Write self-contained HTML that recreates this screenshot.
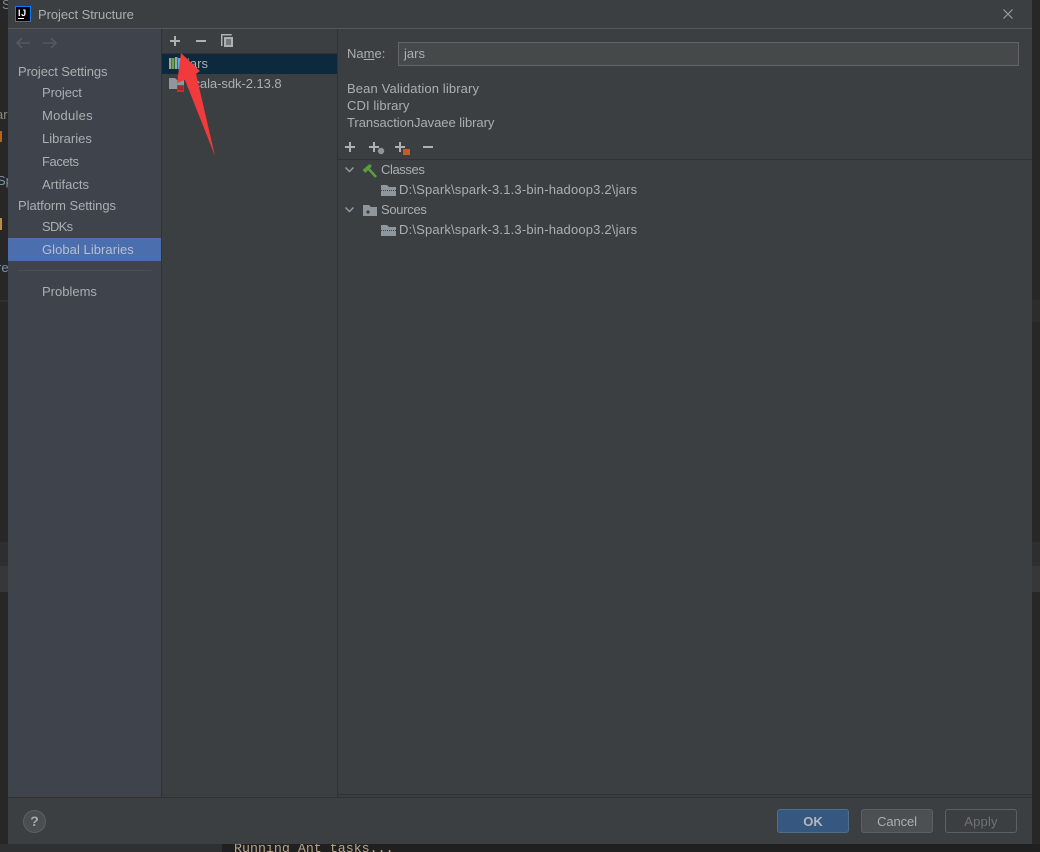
<!DOCTYPE html>
<html><head><meta charset="utf-8"><style>
html,body{margin:0;padding:0;background:#2a2b2c;}
#r{position:relative;width:1040px;height:852px;overflow:hidden;background:#272727;font-family:"Liberation Sans","Noto Sans CJK SC",sans-serif;font-size:13px;color:#abafb1;}
.a{position:absolute;}
.t{position:absolute;white-space:nowrap;line-height:16px;}
svg{position:absolute;left:0;top:0;}
</style></head><body><div id="r">
<div class="a" style="left:0;top:300px;width:8px;height:2px;background:#313131"></div>
<div class="a" style="left:0;top:542px;width:8px;height:24px;background:#2d2e2f"></div>
<div class="a" style="left:0;top:566px;width:8px;height:26px;background:#363738"></div>
<div class="a" style="left:1032px;top:300px;width:8px;height:22px;background:#2c2c2c"></div>
<div class="a" style="left:1032px;top:542px;width:8px;height:24px;background:#2d2e30"></div>
<div class="a" style="left:1032px;top:566px;width:8px;height:26px;background:#363738"></div>
<div class="a" style="left:0;top:844px;width:222px;height:8px;background:#2f3031"></div>
<div class="t" style="left:2px;top:-3px;color:#7d8a97">S</div>
<div class="t" style="left:0;top:107px;color:#8c8c7c;margin-left:-4px">ar</div>
<div class="a" style="left:0;top:131px;width:2px;height:11px;background:#b5641c"></div>
<div class="t" style="left:-3px;top:173px;color:#7c92a8">Sp</div>
<div class="a" style="left:0;top:218px;width:2px;height:12px;background:#c08a4a"></div>
<div class="t" style="left:-3px;top:260px;color:#7c92a8">re</div>
<div class="a" style="left:222px;top:844px;width:818px;height:8px;background:#202020"></div>
<div class="t" style="left:234px;top:841px;font-family:'Liberation Mono',monospace;font-size:13.3px;color:#b8a48a;height:11px;overflow:hidden">Running Ant tasks...</div>

<div class="a" style="left:8px;top:0;width:1024px;height:844px;background:#3c3f41"></div>
<div class="a" style="left:8px;top:28px;width:1024px;height:1px;background:#555759"></div>
<div class="a" style="left:8px;top:29px;width:153px;height:768px;background:#3e434c"></div>
<div class="a" style="left:161px;top:29px;width:1px;height:768px;background:#323232"></div>
<div class="a" style="left:337px;top:29px;width:1px;height:768px;background:#323232"></div>
<div class="a" style="left:162px;top:53px;width:175px;height:1px;background:#323232"></div>
<div class="a" style="left:162px;top:54px;width:175px;height:20px;background:#0d293e"></div>
<div class="a" style="left:338px;top:159px;width:694px;height:1px;background:#323232"></div>
<div class="a" style="left:338px;top:794px;width:694px;height:1px;background:#323232"></div>
<div class="a" style="left:8px;top:797px;width:1024px;height:1px;background:#323232"></div>
<div class="a" style="left:8px;top:238px;width:153px;height:23px;background:#4b6eaf"></div>
<div class="a" style="left:18px;top:270px;width:133px;height:1px;background:#4d4e4f"></div>

<div class="a" style="left:15px;top:6px;width:14px;height:14px;background:#000;border:1px solid #087cfa"></div>
<div class="t" style="left:18px;top:5px;font-size:9px;font-weight:bold;color:#fff;letter-spacing:.6px">IJ</div>
<div class="a" style="left:18px;top:18px;width:6px;height:1px;background:#fff"></div>
<div class="t" style="left:38px;top:7px;letter-spacing:-.06px">Project Structure</div>

<div class="t" style="left:18px;top:64px;letter-spacing:-.1px">Project Settings</div>
<div class="t" style="left:42px;top:85px;letter-spacing:-.1px">Project</div>
<div class="t" style="left:42px;top:108px;letter-spacing:.25px">Modules</div>
<div class="t" style="left:42px;top:131px">Libraries</div>
<div class="t" style="left:42px;top:154px;letter-spacing:-.4px">Facets</div>
<div class="t" style="left:42px;top:177px">Artifacts</div>
<div class="t" style="left:18px;top:198px;letter-spacing:-.06px">Platform Settings</div>
<div class="t" style="left:42px;top:219px;letter-spacing:-.7px">SDKs</div>
<div class="t" style="left:42px;top:242px;color:#b4bfd2;letter-spacing:.05px">Global Libraries</div>
<div class="t" style="left:42px;top:284px">Problems</div>

<div class="t" style="left:187px;top:56px">jars</div>
<div class="t" style="left:187px;top:76px;letter-spacing:-.05px">scala-sdk-2.13.8</div>

<div class="t" style="left:347px;top:46px">Na<span style="text-decoration:underline">m</span>e:</div>
<div class="a" style="left:398px;top:42px;width:621px;height:24px;box-sizing:border-box;background:#45494a;border:1px solid #646464"></div>
<div class="t" style="left:404px;top:46px">jars</div>
<div class="t" style="left:347px;top:81px;letter-spacing:.13px">Bean Validation library</div>
<div class="t" style="left:347px;top:98px;letter-spacing:.1px">CDI library</div>
<div class="t" style="left:347px;top:115px;letter-spacing:-.04px">TransactionJavaee library</div>

<div class="t" style="left:381px;top:162px;letter-spacing:-.4px">Classes</div>
<div class="t" style="left:399px;top:182px;letter-spacing:.18px">D:\Spark\spark-3.1.3-bin-hadoop3.2\jars</div>
<div class="t" style="left:381px;top:202px;letter-spacing:-.3px">Sources</div>
<div class="t" style="left:399px;top:222px;letter-spacing:.18px">D:\Spark\spark-3.1.3-bin-hadoop3.2\jars</div>

<div class="a" style="left:23px;top:810px;width:23px;height:23px;border-radius:50%;background:#4b4e50;border:1px solid #5e6060;box-sizing:border-box"></div>
<div class="t" style="left:23px;top:813px;width:23px;text-align:center;font-weight:bold;font-size:14px;color:#a8abad">?</div>

<div class="a" style="left:777px;top:809px;width:72px;height:24px;box-sizing:border-box;background:#365880;border:1px solid #4c708c;border-radius:3px;text-align:center;line-height:23px;font-weight:bold;color:#b4b8ba">OK</div>
<div class="a" style="left:861px;top:809px;width:72px;height:24px;box-sizing:border-box;background:#4c5052;border:1px solid #5e6060;border-radius:3px;text-align:center;line-height:23px;letter-spacing:-.1px">Cancel</div>
<div class="a" style="left:945px;top:809px;width:72px;height:24px;box-sizing:border-box;background:#3c3f41;border:1px solid #5e6060;border-radius:3px;text-align:center;line-height:23px;color:#6f7173;letter-spacing:.2px">Apply</div>

<svg width="1040" height="852" viewBox="0 0 1040 852" fill="none">
<!-- close -->
<path d="M1003.5 9.5l9 9M1012.5 9.5l-9 9" stroke="#9a9c9e" stroke-width="1.2"/>
<!-- nav arrows -->
<path d="M30 43H17M22 38l-5 5 5 5" stroke="#565a5e" stroke-width="1.6"/>
<path d="M43 43h13M51 38l5 5-5 5" stroke="#565a5e" stroke-width="1.6"/>
<!-- + - copy -->
<path d="M170 41h10M175 36v10" stroke="#aeb1b3" stroke-width="2"/>
<path d="M196 41h10" stroke="#aeb1b3" stroke-width="2"/>
<path d="M221.750 46V34.750h10" stroke="#aeb1b3" stroke-width="1.500"/>
<rect x="224" y="37" width="9" height="10" fill="#aeb1b3"/>
<path d="M226 40h5M226 42h5M226 44h5" stroke="#3c3f41" stroke-width="1"/>
<!-- library icon -->
<rect x="169" y="58" width="2.500" height="11" fill="#a0a4a6"/>
<rect x="172" y="58" width="2.500" height="11" fill="#6ca53f"/>
<rect x="175" y="57" width="2.500" height="12" fill="#a0a4a6"/>
<rect x="178" y="58" width="3" height="11" fill="#40b6e0"/>
<!-- scala folder -->
<path d="M169 78h6l2 2h7v9h-15z" fill="#8e979e"/>
<rect x="177" y="85" width="7" height="7" fill="#c92f2f"/>
<path d="M178 87h5M178 89h5" stroke="#5a2020" stroke-width=".7"/>
<!-- lower toolbar -->
<path d="M345 147h10M350 142v10" stroke="#aeb1b3" stroke-width="2"/>
<path d="M369 147h10M374 142v10" stroke="#aeb1b3" stroke-width="2"/>
<circle cx="381" cy="151" r="3.200" fill="#8f9497"/>
<path d="M395 147h10M400 142v10" stroke="#aeb1b3" stroke-width="2"/>
<rect x="403" y="149" width="7" height="6" fill="#c75b26"/>
<path d="M423 147h10" stroke="#aeb1b3" stroke-width="2"/>
<!-- tree chevrons -->
<path d="M345.500 167.500l4 4 4-4" stroke="#9a9d9f" stroke-width="1.400"/>
<path d="M345.500 207.500l4 4 4-4" stroke="#9a9d9f" stroke-width="1.400"/>
<!-- hammer -->
<path d="M367 167l9 10" stroke="#5b9a3e" stroke-width="2.600"/>
<path d="M362.500 170l7-6 2.500 2-6.500 7z" fill="#5b9a3e"/>
<!-- sources folder -->
<path d="M363 205h6l2 2h6v9h-14z" fill="#8e979e"/>
<circle cx="368" cy="212" r="1.600" fill="#3c3f41"/>
<!-- jar folders -->
<path d="M381 185h6l2 2h7v9h-15z" fill="#8e979e"/>
<path d="M381 190.500h15" stroke="#3c3f41" stroke-width="1" stroke-dasharray="1 1"/>
<path d="M381 225h6l2 2h7v9h-15z" fill="#8e979e"/>
<path d="M381 230.500h15" stroke="#3c3f41" stroke-width="1" stroke-dasharray="1 1"/>
<!-- red arrow -->
<path d="M181 53L200 71 196 74 215 156 185 80 177 83z" fill="#f23a3c"/>
</svg>
</div></body></html>
